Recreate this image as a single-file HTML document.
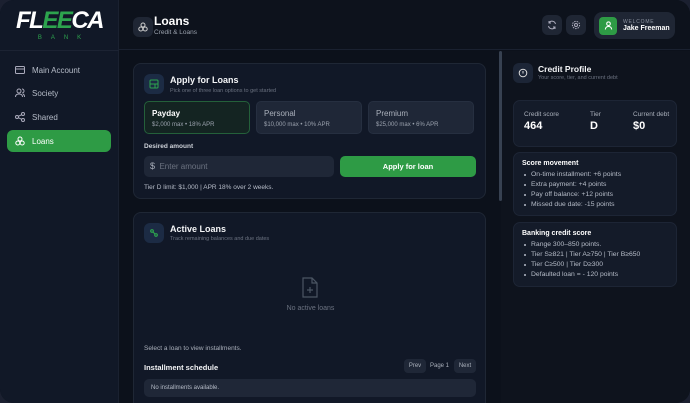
<!DOCTYPE html>
<html><head><style>
*{box-sizing:border-box;margin:0;padding:0}
body{width:690px;height:403px;background:#1b2030;font-family:"Liberation Sans",sans-serif;color:#e5e7eb;overflow:hidden}
.app{position:absolute;left:0;top:0;width:690px;height:403px;background:#0c111b;border-radius:14px;overflow:hidden}
.side{position:absolute;left:0;top:0;width:119px;height:403px;background:#111827;border-right:1px solid #1a2130}
.logo{position:absolute;top:7px;left:0;width:119px;text-align:center}
.logo .f{font-size:24px;font-weight:bold;font-style:italic;letter-spacing:-1.5px;color:#fff}
.logo .f b{color:#2da44e}
.logo .bk{font-size:6px;color:#2da44e;letter-spacing:9px;margin-top:0px;padding-left:9px}
.sline{position:absolute;top:50px;left:0;width:119px;height:1px;background:#1c2333}
.nav{position:absolute;left:7px;width:104px;height:22px;border-radius:6px;font-size:8px;color:#b6bcc8;display:flex;align-items:center;padding-left:8px}
.nav svg{margin-right:7px}
.nav.act{background:#2e9b45;color:#fff}
.hdr{position:absolute;left:119px;top:0;right:0;height:50px;border-bottom:1px solid #1a2130;background:#0d121c}
.ibox{position:absolute;background:#1f2634;border-radius:6px;display:flex;align-items:center;justify-content:center}
.card{position:absolute;background:#111827;border:1px solid #1f2735;border-radius:8px}
.t{position:absolute;font-size:9px;font-weight:bold;color:#f3f4f6}
.s{position:absolute;font-size:5.5px;color:#6b7280}
.opt{position:absolute;top:37px;width:106px;height:33px;background:#1f2737;border-radius:5px;border:1px solid #262f40}
.opt .a{position:absolute;left:7px;top:7px;font-size:8px;color:#aab0bb}
.opt .b{position:absolute;left:7px;top:20px;font-size:6px;color:#9aa1ad}
.right{position:absolute;left:501px;top:51px;right:0;bottom:0;background:#0e131d}
.scroll{position:absolute;left:499px;top:51px;width:3px;height:150px;background:#374151;border-radius:2px}
.rc{position:absolute;left:12px;width:164px;background:#141b29;border:1px solid #1d2535;border-radius:7px}
ul{list-style:none}
li{font-size:6.8px;color:#b6bcc8;height:10px;padding-left:9px;position:relative}
li:before{content:"";position:absolute;left:2px;top:3px;width:2px;height:2px;background:#b6bcc8;border-radius:1px}
</style></head><body><div class="app">
<div class="side">
 <div class="logo"><div class="f">FL<b>EE</b>CA</div><div class="bk">BANK</div></div>
 <div class="sline"></div>
 <div class="nav" style="top:59px"><svg width="10" height="10" viewBox="0 0 10 10" fill="none" stroke="#aab" stroke-width="1"><rect x="0.5" y="1.5" width="9" height="7" rx="1"/><path d="M0.5 4h9"/></svg>Main Account</div>
 <div class="nav" style="top:82px"><svg width="10" height="10" viewBox="0 0 10 10" fill="none" stroke="#aab" stroke-width="1"><circle cx="4" cy="3" r="2"/><path d="M0.5 9c0-2 1.5-3 3.5-3s3.5 1 3.5 3M7 1a2 2 0 010 4M8 6c1 .5 1.5 1.5 1.5 3"/></svg>Society</div>
 <div class="nav" style="top:106px"><svg width="10" height="10" viewBox="0 0 10 10" fill="none" stroke="#aab" stroke-width="1"><circle cx="8" cy="2" r="1.5"/><circle cx="2" cy="5" r="1.5"/><circle cx="8" cy="8" r="1.5"/><path d="M3.3 4.3l3.4-1.6M3.3 5.7l3.4 1.6"/></svg>Shared</div>
 <div class="nav act" style="top:130px"><svg width="10" height="10" viewBox="0 0 10 10" fill="none" stroke="#fff" stroke-width="1"><circle cx="5" cy="3" r="2"/><circle cx="2.8" cy="7" r="2"/><circle cx="7.2" cy="7" r="2"/></svg>Loans</div>
</div>
<div class="hdr">
 <div class="ibox" style="left:14px;top:17px;width:20px;height:20px"><svg width="10" height="10" viewBox="0 0 10 10" fill="none" stroke="#ccc" stroke-width="1"><circle cx="5" cy="3" r="2"/><circle cx="2.8" cy="7" r="2"/><circle cx="7.2" cy="7" r="2"/></svg></div>
 <div style="position:absolute;left:35px;top:14px;font-size:12px;font-weight:bold;color:#fff">Loans</div>
 <div style="position:absolute;left:35px;top:29px;font-size:6.5px;color:#9aa1ad">Credit &amp; Loans</div>
 <div class="ibox" style="left:423px;top:15px;width:20px;height:20px"><svg width="10" height="10" viewBox="0 0 10 10" fill="none" stroke="#aab" stroke-width="1"><path d="M8.5 4A3.5 3.5 0 002 3M1.5 6A3.5 3.5 0 008 7M2 1v2h2M8 9V7H6"/></svg></div>
 <div class="ibox" style="left:447px;top:15px;width:20px;height:20px"><svg width="10" height="10" viewBox="0 0 10 10" fill="none" stroke="#aab" stroke-width="1"><circle cx="5" cy="5" r="1.5"/><circle cx="5" cy="5" r="3.6" stroke-dasharray="1.5 1"/></svg></div>
 <div class="ibox" style="left:475px;top:12px;width:81px;height:27px;justify-content:flex-start;border-radius:8px">
  <div style="margin-left:5px;width:18px;height:18px;background:#2e9b45;border-radius:4px;display:flex;align-items:center;justify-content:center"><svg width="9" height="9" viewBox="0 0 10 10" fill="none" stroke="#fff" stroke-width="1.2"><circle cx="5" cy="3" r="2"/><path d="M1.5 9.5c0-2 1.5-3.5 3.5-3.5s3.5 1.5 3.5 3.5"/></svg></div>
  <div style="margin-left:6px"><div style="font-size:5px;color:#8b92a0;letter-spacing:.8px">WELCOME</div><div style="font-size:7px;font-weight:bold;color:#fff">Jake Freeman</div></div>
 </div>
</div>
<div class="card" style="left:133px;top:63px;width:353px;height:136px">
 <div class="ibox" style="left:10px;top:10px;width:20px;height:20px;background:#1c2b44"><svg width="10" height="10" viewBox="0 0 10 10" fill="none" stroke="#2da44e" stroke-width="1"><rect x="1" y="1" width="8" height="8" rx="1"/><path d="M1 5h8M6 5v4"/></svg></div>
 <div class="t" style="left:36px;top:11px">Apply for Loans</div>
 <div class="s" style="left:36px;top:24px">Pick one of three loan options to get started</div>
 <div class="opt" style="left:10px;background:#142422;border-color:#24603a"><div class="a" style="color:#fff;font-weight:bold">Payday</div><div class="b">$2,000 max • 18% APR</div></div>
 <div class="opt" style="left:122px"><div class="a">Personal</div><div class="b">$10,000 max • 10% APR</div></div>
 <div class="opt" style="left:234px"><div class="a">Premium</div><div class="b">$25,000 max • 6% APR</div></div>
 <div style="position:absolute;left:10px;top:79px;font-size:6.5px;color:#cfd3da;font-weight:bold">Desired amount</div>
 <div style="position:absolute;left:10px;top:92px;width:190px;height:21px;background:#1f2737;border-radius:5px;font-size:8px;color:#6b7280;padding:5px 0 0 6px"><span style="color:#aab0bb;font-size:9px">$</span>&nbsp; Enter amount</div>
 <div style="position:absolute;left:206px;top:92px;width:136px;height:21px;background:#2e9b45;border-radius:5px;font-size:7.5px;color:#fff;font-weight:bold;text-align:center;line-height:21px">Apply for loan</div>
 <div style="position:absolute;left:10px;top:120px;font-size:6.5px;color:#b6bcc8">Tier D limit: $1,000 | APR 18% over 2 weeks.</div>
</div>
<div class="card" style="left:133px;top:212px;width:353px;height:200px">
 <div class="ibox" style="left:10px;top:10px;width:20px;height:20px;background:#1c2b44"><svg width="10" height="10" viewBox="0 0 10 10" fill="none" stroke="#2da44e" stroke-width="1.2"><circle cx="3" cy="3" r="1.3"/><circle cx="7" cy="7" r="1.3"/><path d="M4 4l2 2"/></svg></div>
 <div class="t" style="left:36px;top:11px">Active Loans</div>
 <div class="s" style="left:36px;top:23px">Track remaining balances and due dates</div>
 <svg style="position:absolute;left:166px;top:64px" width="20" height="22" viewBox="0 0 20 22" fill="none" stroke="#4b5563" stroke-width="1.2"><path d="M3 1h9l5 5v14H3z M12 1v5h5 M10 10v6 M7 13h6"/></svg>
 <div style="position:absolute;left:0;width:353px;text-align:center;top:92px;font-size:7px;color:#6b7280">No active loans</div>
 <div style="position:absolute;left:10px;top:132px;font-size:6.5px;color:#aab0bb">Select a loan to view installments.</div>
 <div style="position:absolute;left:10px;top:150px;font-size:7.5px;font-weight:bold;color:#f3f4f6">Installment schedule</div>
 <div style="position:absolute;left:270px;top:146px;width:22px;height:14px;background:#1f2737;border-radius:4px;font-size:6px;color:#aab0bb;text-align:center;line-height:14px">Prev</div>
 <div style="position:absolute;left:296px;top:150px;font-size:6px;color:#aab0bb">Page 1</div>
 <div style="position:absolute;left:320px;top:146px;width:22px;height:14px;background:#1f2737;border-radius:4px;font-size:6px;color:#aab0bb;text-align:center;line-height:14px">Next</div>
 <div style="position:absolute;left:10px;top:166px;width:332px;height:18px;background:#1f2737;border-radius:5px;font-size:6px;color:#b6bcc8;padding:6px 0 0 7px">No installments available.</div>
</div>
<div class="right">
 <div class="ibox" style="left:12px;top:12px;width:20px;height:20px;background:#1c2536"><svg width="10" height="10" viewBox="0 0 10 10" fill="none" stroke="#ddd" stroke-width="1"><circle cx="5" cy="5" r="3.8"/><path d="M5 3v2.5"/></svg></div>
 <div class="t" style="left:37px;top:13px;font-size:8.5px">Credit Profile</div>
 <div class="s" style="left:37px;top:24px">Your score, tier, and current debt</div>
 <div class="rc" style="top:49px;height:47px">
  <div style="position:absolute;left:10px;top:10px;font-size:6.5px;color:#aab0bb">Credit score</div>
  <div style="position:absolute;left:10px;top:19px;font-size:11px;font-weight:bold;color:#fff">464</div>
  <div style="position:absolute;left:76px;top:10px;font-size:6.5px;color:#aab0bb">Tier</div>
  <div style="position:absolute;left:76px;top:19px;font-size:11px;font-weight:bold;color:#fff">D</div>
  <div style="position:absolute;left:119px;top:10px;font-size:6.5px;color:#aab0bb">Current debt</div>
  <div style="position:absolute;left:119px;top:19px;font-size:11px;font-weight:bold;color:#fff">$0</div>
 </div>
 <div class="rc" style="top:101px;height:64px;padding:7px 0 0 8px">
  <div style="font-size:7px;font-weight:bold;color:#fff;margin-bottom:4px">Score movement</div>
  <ul><li>On-time installment: +6 points</li><li>Extra payment: +4 points</li><li>Pay off balance: +12 points</li><li>Missed due date: -15 points</li></ul>
 </div>
 <div class="rc" style="top:171px;height:65px;padding:7px 0 0 8px">
  <div style="font-size:7px;font-weight:bold;color:#fff;margin-bottom:4px">Banking credit score</div>
  <ul><li>Range 300–850 points.</li><li>Tier S≥821 | Tier A≥750 | Tier B≥650</li><li>Tier C≥500 | Tier D≥300</li><li>Defaulted loan = - 120 points</li></ul>
 </div>
</div>
<div class="scroll"></div>
</div></body></html>
